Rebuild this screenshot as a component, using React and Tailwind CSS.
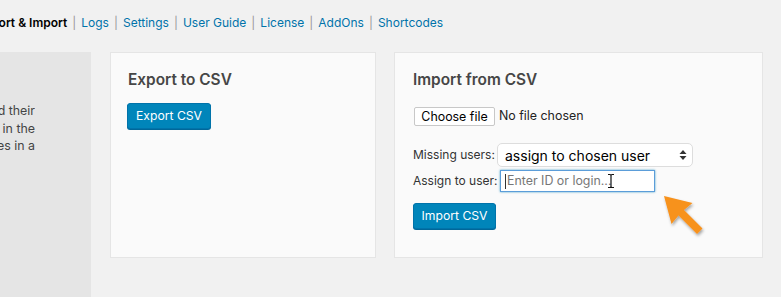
import React from 'react';

const navLinks = ['Logs', 'Settings', 'User Guide', 'License', 'AddOns', 'Shortcodes'];

const sideLines = ['Export your users and their', 'metadata to a CSV file in the', 'so you can edit the values in a'];

export default function App() {
    return (
        <div className="w-[781px] h-[297px] overflow-hidden bg-[#f1f1f1] text-[#444] font-['Inter','Liberation_Sans',sans-serif]">
            {/* sub navigation */}
            <div className="h-[52px] pt-[13px] overflow-hidden whitespace-nowrap text-[12px] leading-[20px]">
                <span className="-ml-[23px] font-semibold text-black">Export &amp; Import</span>
                {navLinks.map((link) => (
                    <span key={link}>
                        <span className="text-[#999] mx-[5px]">|</span>
                        <a className="text-[#0073aa]">{link}</a>
                    </span>
                ))}
            </div>

            <div className="flex h-[245px]">
                {/* sidebar, cut at the left */}
                <div className="w-[91px] bg-[#e5e5e5] pt-[50px] text-[12.4px] leading-[17.5px] text-[#444]">
                    {sideLines.map((line) => (
                        <div key={line} className="flex justify-end overflow-hidden whitespace-nowrap w-[35px]">
                            <span>{line}</span>
                        </div>
                    ))}
                </div>

                {/* export panel */}
                <div className="ml-[19px] w-[266px] h-[206px] bg-[#fafafa] border border-[#e5e5e5] pl-[17px] pt-[17px]">
                    <h2 className="text-[15.4px] leading-[20px] font-semibold text-[#464646] whitespace-nowrap">Export to CSV</h2>
                    <button className="mt-[13px] -ml-[1px] h-[26px] w-[84px] rounded-[3px] bg-[#0085ba] border border-[#0073aa] shadow-[0_1px_0_#006799] text-white text-[12.2px] leading-[24px] whitespace-nowrap">
                        Export CSV
                    </button>
                </div>

                {/* import panel */}
                <div className="relative ml-[18px] w-[369px] h-[206px] bg-[#fafafa] border border-[#e5e5e5] pl-[18px] pt-[17px]">
                    <h2 className="text-[15.4px] leading-[20px] font-semibold text-[#464646] whitespace-nowrap">Import from CSV</h2>

                    <div className="mt-[17px] flex items-center h-[19px] whitespace-nowrap">
                        <div className="h-[19px] w-[81px] ml-[1px] bg-white border border-[#c8c8c8] rounded-[2px] text-[12.4px] leading-[17px] text-black text-center">
                            Choose file
                        </div>
                        <span className="ml-[4px] text-[12.4px] text-[#222]">No file chosen</span>
                    </div>

                    <div className="mt-[17px] flex items-center whitespace-nowrap">
                        <span className="text-[12px] text-[#333] w-[84px]">Missing users:</span>
                        <div className="w-[196px] h-[24px] bg-white border border-[#ddd] rounded-[5px] flex items-center justify-between pl-[7px] pr-[5px] text-[14px] text-black">
                            <span>assign to chosen user</span>
                            <svg width="8" height="12" viewBox="0 0 8 12">
                                <path d="M4 1 L7.5 5 H0.5 Z" fill="#333" />
                                <path d="M4 11 L7.5 7 H0.5 Z" fill="#333" />
                            </svg>
                        </div>
                    </div>

                    <div className="mt-[3px] flex items-center whitespace-nowrap">
                        <span className="text-[12px] text-[#333] w-[87px]">Assign to user:</span>
                        <div className="relative w-[155px] h-[22px] bg-white border border-[#5b9dd9] shadow-[0_0_2px_rgba(30,140,190,0.8)] flex items-center pl-[4px] text-[12.4px] text-[#777]">
                            <span className="w-px h-[15px] bg-[#333] mr-[1px]" />
                            <span>Enter ID or login...</span>
                            <svg className="absolute left-[106px] top-[2px]" width="8" height="16" viewBox="0 0 8 16">
                                <path d="M1 1.5 H3 Q4 1.5 4 3 V13 Q4 14.5 3 14.5 H1 M7 1.5 H5 Q4 1.5 4 3 M4 13 Q4 14.5 5 14.5 H7" fill="none" stroke="#111" strokeWidth="1.2" />
                            </svg>
                        </div>
                    </div>

                    <button className="mt-[11px] h-[26px] w-[83px] rounded-[3px] bg-[#0085ba] border border-[#0073aa] shadow-[0_1px_0_#006799] text-white text-[12.2px] leading-[24px] whitespace-nowrap">
                        Import CSV
                    </button>

                    {/* orange pointer arrow */}
                    <svg className="absolute left-[264px] top-[138px]" width="48" height="48" viewBox="0 0 48 48">
                        <defs>
                            <filter id="sh" x="-20%" y="-20%" width="140%" height="140%">
                                <feDropShadow dx="1" dy="2" stdDeviation="1.5" floodColor="#000" floodOpacity="0.35" />
                            </filter>
                        </defs>
                        <path d="M5 5 L33.5 12 L25 19 L43.5 37.5 L38 43 L19.5 24.5 L12.5 33 Z" fill="#f7921e" filter="url(#sh)" />
                    </svg>
                </div>
            </div>
        </div>
    );
}
